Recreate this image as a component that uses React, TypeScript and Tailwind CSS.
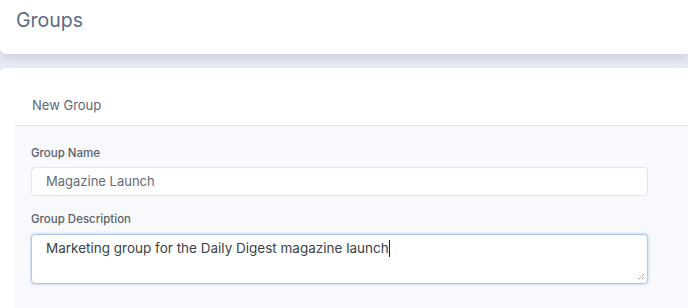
import React from "react";

export default function App() {
  const font = { fontFamily: "Inter, 'Noto Sans', sans-serif" };
  return (
    <div className="w-[688px] h-[308px] overflow-hidden bg-[#e8ebf3]" style={font}>
      <div className="h-[54px] bg-white rounded-bl-[6px] shadow-[0_4px_10px_rgba(150,160,180,0.35)] flex items-center pl-[16px] relative z-10">
        <span className="text-[19.5px] text-[#5b6b84] leading-none -mt-[13px]">Groups</span>
      </div>
      <div className="mt-[14px] bg-white rounded-tl-[6px] pl-[15px] h-[240px]">
        <div className="h-[58px] border-b border-[#dde2ea] flex items-center pl-[17px] pt-[17px]">
          <span className="text-[13px] text-[#5c6678] leading-none">New Group</span>
        </div>
        <div className="bg-[#f8f9fd] pl-[16px] pr-[40px] pt-[19px] h-[200px]">
          <label className="block text-[11.5px] font-medium text-[#5a5f69] leading-[16px]">Group Name</label>
          <div className="mt-[6px] h-[29px] bg-white border border-[#e2e5ec] rounded-[4px] flex items-center pl-[14px] text-[13px] text-[#666c78]">
            Magazine Launch
          </div>
          <label className="block mt-[15px] text-[11.5px] font-medium text-[#5a5f69] leading-[16px]">Group Description</label>
          <div className="mt-[7px] h-[50px] bg-white border border-[#a9c8f0] rounded-[4px] shadow-[0_0_2px_1px_rgba(180,205,240,0.6)] relative pl-[14px] pt-[3px] text-[13.5px] text-[#3a3f4a]">
            <span>Marketing group for the Daily Digest magazine launch</span>
            <span className="inline-block w-[1px] h-[17px] bg-[#222] align-middle -mt-[2px]"></span>
            <svg className="absolute right-[2px] bottom-[2px]" width="9" height="9" viewBox="0 0 9 9">
              <path d="M8 2 L2 8 M8 5 L5 8" stroke="#666" strokeWidth="1" strokeDasharray="1 1" />
            </svg>
          </div>
        </div>
      </div>
    </div>
  );
}
